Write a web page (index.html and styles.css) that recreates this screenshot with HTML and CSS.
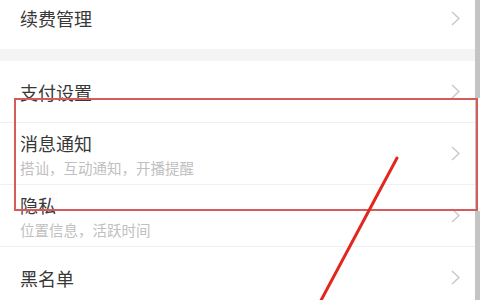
FILE: index.html
```html
<!DOCTYPE html>
<html lang="zh-CN">
<head>
    <meta charset="UTF-8">
    <meta name="viewport" content="width=device-width, initial-scale=1.0">
    <title>设置</title>
    <link rel="stylesheet" href="styles.css">
</head>
<body>
    <div class="page">
        <div class="settings">
            <!-- 第一组 -->
            <div class="group first">
                <div class="item">
                    <div class="item-text">
                        <div class="item-title">续费管理</div>
                    </div>
                    <svg class="arrow" width="9" height="15" viewBox="0 0 9 15"><path d="M1 1 L8 7.5 L1 14" fill="none" stroke="#c9c9c9" stroke-width="1.5"/></svg>
                </div>
            </div>

            <div class="gap"></div>

            <!-- 第二组 -->
            <div class="group">
                <div class="item">
                    <div class="item-text">
                        <div class="item-title">支付设置</div>
                    </div>
                    <svg class="arrow" width="9" height="15" viewBox="0 0 9 15"><path d="M1 1 L8 7.5 L1 14" fill="none" stroke="#c9c9c9" stroke-width="1.5"/></svg>
                </div>
                <div class="item tall">
                    <div class="item-text">
                        <div class="item-title">消息通知</div>
                        <div class="item-desc">搭讪，互动通知，开播提醒</div>
                    </div>
                    <svg class="arrow" width="9" height="15" viewBox="0 0 9 15"><path d="M1 1 L8 7.5 L1 14" fill="none" stroke="#c9c9c9" stroke-width="1.5"/></svg>
                </div>
                <div class="item tall">
                    <div class="item-text">
                        <div class="item-title">隐私</div>
                        <div class="item-desc">位置信息，活跃时间</div>
                    </div>
                    <svg class="arrow" width="9" height="15" viewBox="0 0 9 15"><path d="M1 1 L8 7.5 L1 14" fill="none" stroke="#c9c9c9" stroke-width="1.5"/></svg>
                </div>
                <div class="item">
                    <div class="item-text">
                        <div class="item-title">黑名单</div>
                    </div>
                    <svg class="arrow" width="9" height="15" viewBox="0 0 9 15"><path d="M1 1 L8 7.5 L1 14" fill="none" stroke="#c9c9c9" stroke-width="1.5"/></svg>
                </div>
            </div>
        </div>
        <div class="scrollbar"></div>

        <!-- 标注 -->
        <div class="mark-box"></div>
        <svg class="mark-line" width="480" height="300" viewBox="0 0 480 300">
            <line x1="397" y1="158" x2="318" y2="306" stroke="#e3261f" stroke-width="3" stroke-linecap="round"/>
        </svg>
    </div>
</body>
</html>
```

FILE: styles.css
```css
body {
    margin: 0;
    background: #fff;
    font-family: "Noto Sans CJK SC", "Noto Sans", sans-serif;
}
.page {
    position: relative;
    width: 480px;
    height: 300px;
    overflow: hidden;
    display: flex;
}
.settings {
    width: 475px;
    margin-top: -13px;
}
.gap {
    height: 12px;
    background: #f4f4f4;
}
.item {
    display: flex;
    align-items: center;
    height: 61px;
    padding: 0 15px 0 20px;
    border-bottom: 1px solid #efefef;
}
.first .item {
    height: 62px;
    border-bottom: none;
}
.item.tall {
    align-items: flex-start;
}
.item.tall .item-text {
    padding-top: 9px;
}
.item.tall .arrow {
    margin-top: 23px;
}
.item-text {
    flex: 1;
}
.item-title {
    font-size: 18px;
    line-height: 22px;
    color: #383838;
}
.item-desc {
    margin-top: 4px;
    font-size: 14.5px;
    line-height: 20px;
    color: #c0c0c0;
}
.scrollbar {
    width: 5px;
    background: #c4c4c4;
}
.mark-box {
    position: absolute;
    left: 14px;
    top: 98px;
    width: 460px;
    height: 109px;
    border: 2px solid #d65b5b;
    box-shadow: 4px 0 0 #fff;
}
.mark-line {
    position: absolute;
    left: 0;
    top: 0;
}
```
